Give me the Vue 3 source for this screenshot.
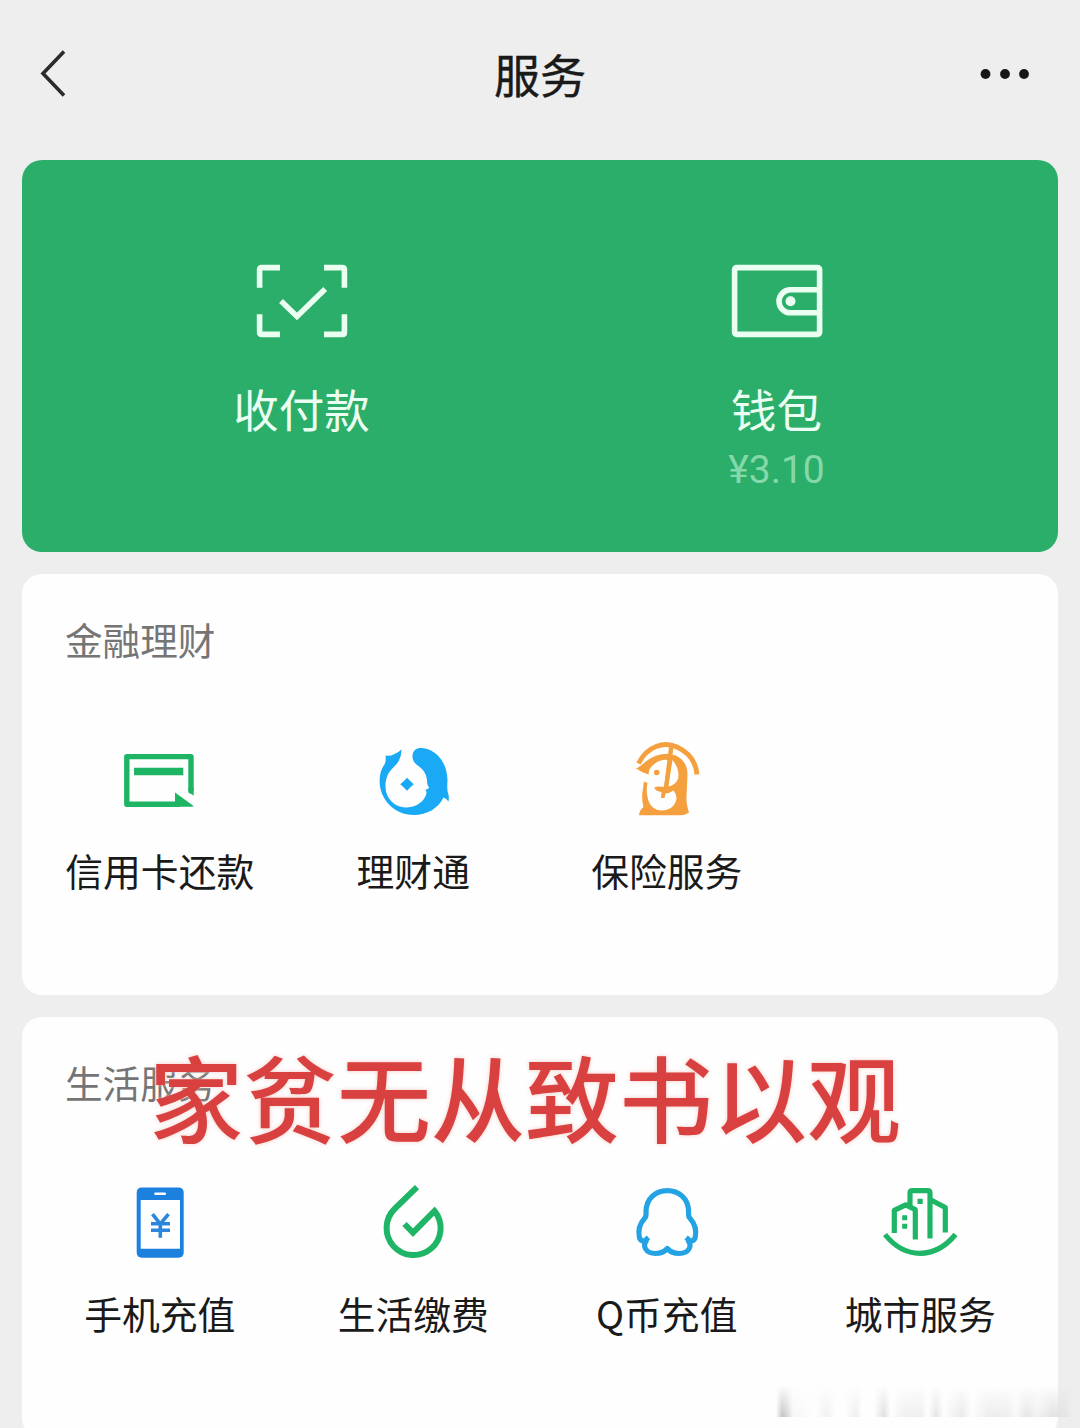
<script setup>
const finance = [
  { icon: 'card', label: '信用卡还款' },
  { icon: 'fund', label: '理财通' },
  { icon: 'insurance', label: '保险服务' },
];

const life = [
  { icon: 'phone', label: '手机充值' },
  { icon: 'utility', label: '生活缴费' },
  { icon: 'penguin', label: 'Q币充值' },
  { icon: 'city', label: '城市服务' },
];

const sections = [
  { title: '金融理财', items: finance },
  { title: '生活服务', items: life, caption: '家贫无从致书以观' },
];
</script>

<template>
  <div class="page">
    <header class="header">
      <svg class="header__back" width="30" height="50" viewBox="0 0 30 50">
        <path d="M26 2.500 5 24.500 26 46.500" />
      </svg>
      <h1 class="header__title">服务</h1>
      <svg class="header__more" width="50" height="12" viewBox="0 0 50 12">
        <circle cx="5.500" cy="6" r="4.900" />
        <circle cx="25" cy="6" r="4.900" />
        <circle cx="44" cy="6" r="4.900" />
      </svg>
    </header>

    <section class="pay">
      <div class="pay__item">
        <svg class="pay__icon" width="92" height="74" viewBox="0 0 92 74">
          <path d="M3.6 23.7V5.6q0-2 2-2H24M68 3.6h18.4q2 0 2 2v18.1M88.4 50.3v18.1q0 2-2 2H68M24 70.4H5.6q-2 0-2-2V50.3" />
          <path d="M25 37 41 52.4 69.2 25" />
        </svg>
        <div class="pay__label">收付款</div>
      </div>
      <div class="pay__item">
        <svg class="pay__icon" width="92" height="74" viewBox="0 0 92 74">
          <rect x="3.6" y="3.6" width="85" height="66.8" rx="2" />
          <path d="M88.5 25.8H59.5a11.5 11.5 0 0 0 0 23H88.5" />
          <circle class="pay__dot" cx="59.5" cy="37.3" r="5" />
        </svg>
        <div class="pay__label">钱包</div>
        <div class="pay__amount">¥3.10</div>
      </div>
    </section>

    <section v-for="section in sections" :key="section.title" class="card">
      <h2 class="card__title">{{ section.title }}</h2>
      <div class="card__grid">
        <div v-for="item in section.items" :key="item.label" class="entry">
          <svg class="entry__icon" width="80" height="80" viewBox="0 0 80 80">
            <g v-if="item.icon === 'card'" fill="#1db564">
              <path d="M71 51V16.600H6.800v47.600H60" fill="none" stroke="#1db564" stroke-width="5.400" stroke-linejoin="round" />
              <path d="M68.300 48h5.400v7.600l-5.400-3.200zM14 27.800h49.300v7.400H14zM55 52.500 73.700 66q-.5.800-2 .8H55z" />
            </g>
            <g v-else-if="item.icon === 'fund'" fill="#1aa9f5">
              <path d="M12.500 15.500Q17 16.500 21 14.200 25.500 12.800 28.600 9.300 28.500 16 25.500 21.500C22 26.500 17.500 29 14.500 35.500 12 42 12 47 13.300 52.500 16 62 24 67.500 34 67.400 44 67 51 61.500 53.300 54Q54 51.500 52.200 49.800 54.500 49.800 56.300 47.500 54 46 54 40C53 32 49 28.500 44 25 38.500 21 38 13 42.500 9.500 47 7 53 8 58 10.500 68 15.500 74.300 27 74.500 40Q74 47 74.600 51.500 76.500 56.500 75.500 61.500 73.500 58.500 70.500 57.500C65 68.500 54 75 41 75 21 75 6.600 59 6.600 41 6.600 34 8.500 28 12 23.500Q13.200 19 12.500 15.500z" />
              <path d="M34 37.800q4 4.200 6.800 6.500Q38 46.500 34 50.800 30 46.500 27.200 44.300 30 42.200 34 37.800z" />
            </g>
            <g v-else-if="item.icon === 'insurance'" fill="#f5a03f">
              <path d="M11.500 23.500C20 6 37 1 50 7 63 13 69 23 70 34.500" fill="none" stroke="#f5a03f" stroke-width="4.800" />
              <path d="M9 28.500C15 26 19 20 26 17 31 14.500 36 13.700 41 13.700L49 15.500C56 19 60.500 25 60.500 34L59.500 57Q59 63 62 72.500 58 75.500 52 75.300H12Q12.500 70 16.500 67 14.500 60 15.500 52L17 41.500 20.500 43Q19 50 20.500 57C22 66 28 70.500 35 70.500 43 70.500 49 65 49.500 58Q49.500 54 46.500 50.500 43 53 38.500 53.500L37.500 58 34 58 34.500 52Q29 51.500 27 47.500L31 46.500 37 46.800 41.500 20Q34 19 28 23.500 21.500 28 21.500 34.500 14 32 9 28.500z" />
              <path d="M45.500 20 41 46.500Q48 45.500 51 39 53 29 45.500 20z" fill="#fff" />
              <path d="M42 7h4.500l-5 40H37z" />
              <circle cx="29.700" cy="32.500" r="2.800" />
            </g>
            <g v-else-if="item.icon === 'phone'">
              <rect x="16.700" y="4.400" width="47" height="70.300" rx="5" fill="#1c80df" />
              <path d="M20.700 17H60v48.700H20.700z" fill="#fff" />
              <path d="M35.500 10.800h9.300" stroke="#fff" stroke-width="2.600" stroke-linecap="round" />
              <path d="M32.500 31.200 40.300 41l8.200-9.800M31 40.800h19M31 47.200h19M40.300 40.500v14.200" fill="none" stroke="#2c87dc" stroke-width="3.600" />
            </g>
            <g v-else-if="item.icon === 'utility'" fill="none" stroke="#1fb566" stroke-width="6">
              <path d="M44 4.200 22 25.500A27 27 0 1 0 61.500 28L40 49.700 31.500 41" />
            </g>
            <g v-else-if="item.icon === 'penguin'" fill="none" stroke="#23a3e3" stroke-width="5.200" stroke-linejoin="round">
              <path d="M21.500 54.500 17.500 58Q14 58.500 12.500 55 10 43.500 17.500 35.500 19.500 33.500 19 29C19 15 29 7.700 40.300 7.700S61.600 15 61.600 29Q61.100 33.500 63.100 35.500 70.600 43.500 68.100 55 66.600 58.500 63.100 58L59.100 54.500" />
              <path d="M20 57C14.500 63 19 70.500 28.500 70.500Q36 70.500 40.300 65.500 44.600 70.500 52.100 70.500C61.600 70.500 66.100 63 60.600 57" />
            </g>
            <g v-else fill="none" stroke="#1fb566" stroke-width="5.200" stroke-linejoin="round">
              <path d="M14.300 50V27.300L25.700 21.800 35.300 26.600V56.500M30 23.500V10.200q0-2.500 2.500-2.500h15q2.500 0 2.500 2.500V55.500M51.500 17.300 65.300 24.500V49.500" />
              <path d="M5 51.500Q20 70.300 40 70.300T75.500 51.500" />
              <path d="M37.500 15.800h5.200v5.200h-5.200zM22.200 32.200h5v5h-5zM22.200 40.800h5v5h-5z" fill="#1fb566" stroke="none" />
            </g>
          </svg>
          <div class="entry__label">{{ item.label }}</div>
        </div>
      </div>
      <div v-if="section.caption" class="card__caption">{{ section.caption }}</div>
    </section>

    <div class="smudge"></div>
  </div>
</template>

<style>
body {
  background: #eee;
}
</style>

<style scoped>
.page {
  position: relative;
  box-sizing: border-box;
  width: 1080px;
  height: 1428px;
  padding: 0 22px;
  overflow: hidden;
  background: #eee;
  color: #1a1a1a;
  font-family: 'Noto Sans CJK SC', sans-serif;
}

h1,
h2 {
  margin: 0;
  font-weight: 400;
}

.header {
  display: flex;
  align-items: center;
  justify-content: space-between;
  height: 147px;
  margin-bottom: 13px;
  padding: 0 28px 0 16px;
}

.header__back {
  fill: none;
  stroke: #2b2b2b;
  stroke-width: 3.6;
}

.header__title {
  margin: 0 0 2px 32px;
  font-size: 46px;
  line-height: 60px;
  -webkit-text-stroke: 0.4px currentColor;
}

.header__more {
  fill: #171717;
}

.pay {
  display: flex;
  box-sizing: border-box;
  height: 391.5px;
  padding: 104px 44px 0 42px;
  border-radius: 20px;
  background: #2bae69;
}

.pay__item {
  display: flex;
  flex: 1;
  flex-direction: column;
  align-items: center;
}

.pay__icon {
  fill: none;
  stroke: #eafff2;
  stroke-width: 5.6;
}

.pay__dot {
  fill: #eafff2;
  stroke: none;
}

.pay__label {
  margin-top: 40px;
  color: #eafff2;
  font-size: 45.5px;
  line-height: 60px;
}

.pay__amount {
  margin-top: 7px;
  color: #85d8a9;
  font-family: Roboto, 'Noto Sans CJK SC', sans-serif;
  font-size: 39px;
  line-height: 50px;
}

.card {
  position: relative;
  box-sizing: border-box;
  height: 421px;
  margin-top: 22px;
  padding: 40px 11px 0;
  border-radius: 20px;
  background: #fefefe;
}

.card__title {
  padding-left: 32px;
  color: #757575;
  font-size: 37.6px;
  line-height: 50px;
}

.card__grid {
  display: grid;
  grid-template-columns: repeat(4, 1fr);
  margin-top: 76px;
}

.entry {
  display: flex;
  flex-direction: column;
  align-items: center;
}

.entry__label {
  margin-top: 25px;
  font-size: 37.8px;
  line-height: 50px;
  white-space: nowrap;
}

.card__caption {
  position: absolute;
  top: 18px;
  left: 127px;
  color: #d94141;
  font-size: 94px;
  font-weight: 500;
  line-height: 120px;
  white-space: nowrap;
  text-shadow: 0 0 4px rgba(240, 190, 180, 0.8);
}

/* faded strip in the bottom right corner */
.smudge {
  position: absolute;
  top: 1385px;
  left: 776px;
  width: 296px;
  height: 32px;
  background: linear-gradient(
    90deg,
    transparent 0,
    #c4c4c4 6px,
    #d0d0d0 10px,
    #f6f6f6 17px,
    transparent 40px,
    #f1f1f1 50px,
    transparent 60px,
    transparent 68px,
    #eee 80px,
    transparent 86px,
    transparent 98px,
    #dedede 108px,
    transparent 115px,
    #f0f0f0 128px,
    #eee 145px,
    transparent 152px,
    #e4e4e4 160px,
    transparent 168px,
    #e8e8e8 186px,
    transparent 196px,
    #ececec 212px,
    #eee 232px,
    #f8f8f8 240px,
    #e6e6e6 250px,
    #f1f1f1 262px,
    #e2e2e2 276px,
    #e4e4e4 290px,
    transparent 296px
  );
  -webkit-mask-image: linear-gradient(transparent, #000);
  mask-image: linear-gradient(transparent, #000);
}
</style>
